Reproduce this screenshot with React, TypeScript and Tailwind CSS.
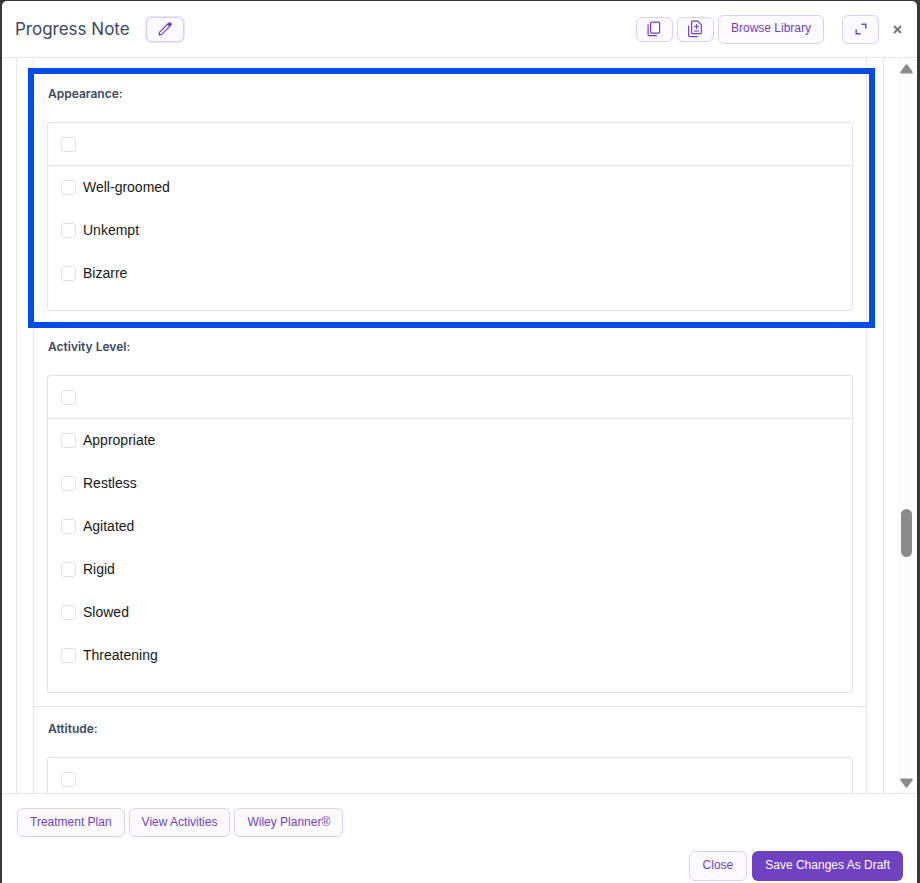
import type { ReactNode } from 'react';

type Section = { title: string; options: string[] };

const sections: Section[] = [
    { title: 'Appearance', options: ['Well-groomed', 'Unkempt', 'Bizarre'] },
    {
        title: 'Activity Level',
        options: ['Appropriate', 'Restless', 'Agitated', 'Rigid', 'Slowed', 'Threatening'],
    },
    { title: 'Attitude', options: [] },
];

const checkboxClass =
    'block size-[15px] shrink-0 appearance-none rounded-[3px] border border-[#dfe1ee] bg-white checked:border-[#6f42c1] checked:bg-[#6f42c1]';

function PencilIcon() {
    return (
        <svg width="16" height="16" viewBox="0 0 16 16" fill="none" stroke="currentColor" strokeLinejoin="round">
            <path d="M2 14l.6-2.8 8.2-8.2 2.2 2.2-8.2 8.2z" strokeWidth="1.2" />
            <path d="M10.6 3.2l1.4-1.4a1 1 0 0 1 1.4 0l.8.8a1 1 0 0 1 0 1.4l-1.4 1.4z" fill="currentColor" />
        </svg>
    );
}

function CopyIcon() {
    return (
        <svg width="16" height="16" viewBox="0 0 16 16" fill="none" stroke="currentColor" strokeWidth="1.2">
            <rect x="4.6" y="1.1" width="9" height="11" rx="1" />
            <path d="M2.1 3.5v10a1.2 1.2 0 0 0 1.2 1.2h7.6" />
        </svg>
    );
}

function CopyAddIcon() {
    return (
        <svg width="16" height="18" viewBox="0 0 16 18" fill="none" stroke="currentColor" strokeWidth="1.2">
            <path d="M5.6 1.1h5l3.8 3.8v7.8a1 1 0 0 1-1 1H5.6a1 1 0 0 1-1-1V2.1a1 1 0 0 1 1-1z" />
            <path d="M1.6 5.5v10a1.2 1.2 0 0 0 1.2 1.2h8" />
            <path d="M9.500 4v5M7 6.500h5M7 11h5" />
        </svg>
    );
}

function ExpandIcon() {
    return (
        <svg width="12" height="12" viewBox="0 0 12 12" fill="none" stroke="currentColor" strokeWidth="1.4">
            <path d="M6.5 1.2h4.3v4.3M1.2 6.5v4.3h4.3" />
        </svg>
    );
}

function CloseIcon() {
    return (
        <svg width="9" height="9" viewBox="0 0 9 9" fill="none" stroke="currentColor" strokeWidth="2">
            <path d="M1 1l7 7M8 1L1 8" />
        </svg>
    );
}

function OutlineButton({
    children,
    label,
    className = 'h-[29px] px-3 pb-0.5',
}: {
    children: ReactNode;
    label?: string;
    className?: string;
}) {
    return (
        <button
            type="button"
            aria-label={label}
            className={`flex items-center justify-center rounded-md border border-[#dccff5] bg-[#fcfaff] text-xs text-[#6f42c1] ${className}`}
        >
            {children}
        </button>
    );
}

function ChecklistSection({ section, highlighted }: { section: Section; highlighted: boolean }) {
    const id = section.title.toLowerCase().replace(/\s/g, '-');

    return (
        <section className="relative border-t border-[#e2e5ef] px-[13px] pb-[13px]">
            <h2 className="flex h-[50px] items-start pt-[14px] pl-px font-[Inter,sans-serif] text-xs leading-4 font-semibold text-[#3b4863]">
                {section.title}:
            </h2>
            <div className="rounded-[3px] border border-[#e2e3e5] pb-[15px]">
                <div className="flex h-[43px] items-center border-b border-[#dee0e3] px-[13px]">
                    <input type="checkbox" aria-label={`Select all: ${section.title}`} className={checkboxClass} />
                </div>
                <ul>
                    {section.options.map((option, i) => (
                        <li key={option} className="flex h-[43px] items-center gap-[7px] px-[13px]">
                            <input type="checkbox" id={`${id}-${i}`} className={checkboxClass} />
                            <label htmlFor={`${id}-${i}`} className="pb-0.5 text-sm leading-4 text-[#16181b]">
                                {option}
                            </label>
                        </li>
                    ))}
                </ul>
            </div>
            {highlighted && (
                <div className="pointer-events-none absolute -top-1 -right-[9px] -bottom-1 -left-[6px] z-10 border-[6px] border-[#004de6]" />
            )}
        </section>
    );
}

export default function App() {
    return (
        <div className="h-screen bg-[#38383b] pt-px pr-[3px] pl-[2px] font-['Liberation_Sans',Arial,sans-serif]">
            <div role="dialog" aria-label="Progress Note" className="flex h-full flex-col overflow-hidden rounded-t-[5px] bg-white">
                {/* Header */}
                <header className="flex h-[57px] shrink-0 items-center border-b border-[#e2e5ef] pr-[15px] pl-[13px]">
                    <h1 className="font-[Inter,sans-serif] text-[17px] leading-6 text-[#3b4863]">Progress Note</h1>
                    <OutlineButton label="Edit title" className="ml-4 h-[25px] w-[38px] ring-1 ring-[#ebe2fb]">
                        <PencilIcon />
                    </OutlineButton>
                    <div className="ml-auto flex items-center gap-1">
                        <OutlineButton label="Copy note" className="h-[25px] w-[37px]">
                            <CopyIcon />
                        </OutlineButton>
                        <OutlineButton label="Copy into new note" className="h-[25px] w-[37px]">
                            <CopyAddIcon />
                        </OutlineButton>
                        <OutlineButton>Browse Library</OutlineButton>
                    </div>
                    <OutlineButton label="Expand" className="ml-[18px] h-[29px] w-[37px]">
                        <ExpandIcon />
                    </OutlineButton>
                    <button type="button" aria-label="Close dialog" className="ml-[14px] text-[#777]">
                        <CloseIcon />
                    </button>
                </header>

                {/* Note body */}
                <div className="flex min-h-0 flex-1">
                    <main className="flex-1 overflow-y-auto pr-[13px] pl-[14px] [scrollbar-width:none]">
                        <div className="border-x border-[#e2e5ef] px-4">
                            <div className="border-x border-[#e2e5ef] pt-[13px]">
                                {sections.map((section, i) => (
                                    <ChecklistSection key={section.title} section={section} highlighted={i === 0} />
                                ))}
                            </div>
                        </div>
                    </main>
                    <div aria-hidden="true" className="flex w-5 shrink-0 flex-col items-center bg-[#fcfcfc] pt-[6px] pr-0.5 pb-[5px]">
                        <svg width="13" height="10" viewBox="0 0 13 10" fill="#8b8b8b">
                            <path d="M5.6.8a1.2 1.2 0 0 1 1.8 0l5 6.8c.6.9.2 1.9-.9 1.9h-10C.4 9.5 0 8.5.6 7.6z" />
                        </svg>
                        <div className="flex-[435]" />
                        <div className="h-12 w-[11px] rounded-full bg-[#8b8b8b]" />
                        <div className="flex-[221]" />
                        <svg width="13" height="10" viewBox="0 0 13 10" fill="#8b8b8b">
                            <path d="M5.6 9.2a1.2 1.2 0 0 0 1.8 0l5-6.8c.6-.9.2-1.9-.9-1.9h-10C.4.5 0 1.5.6 2.4z" />
                        </svg>
                    </div>
                </div>

                {/* Footer */}
                <footer className="flex shrink-0 flex-col gap-[14px] border-t border-[#e2e5ef] pt-[14px] pr-[14px] pb-[2px] pl-[15px]">
                    <div className="flex gap-1">
                        <OutlineButton>Treatment Plan</OutlineButton>
                        <OutlineButton>View Activities</OutlineButton>
                        <OutlineButton>Wiley Planner®</OutlineButton>
                    </div>
                    <div className="flex justify-end gap-[5px]">
                        <OutlineButton className="h-[30px] px-[13px] pb-0.5">Close</OutlineButton>
                        <button type="button" className="h-[30px] rounded-md bg-[#6f42c1] px-[13px] pb-0.5 text-xs text-white">
                            Save Changes As Draft
                        </button>
                    </div>
                </footer>
            </div>
        </div>
    );
}
